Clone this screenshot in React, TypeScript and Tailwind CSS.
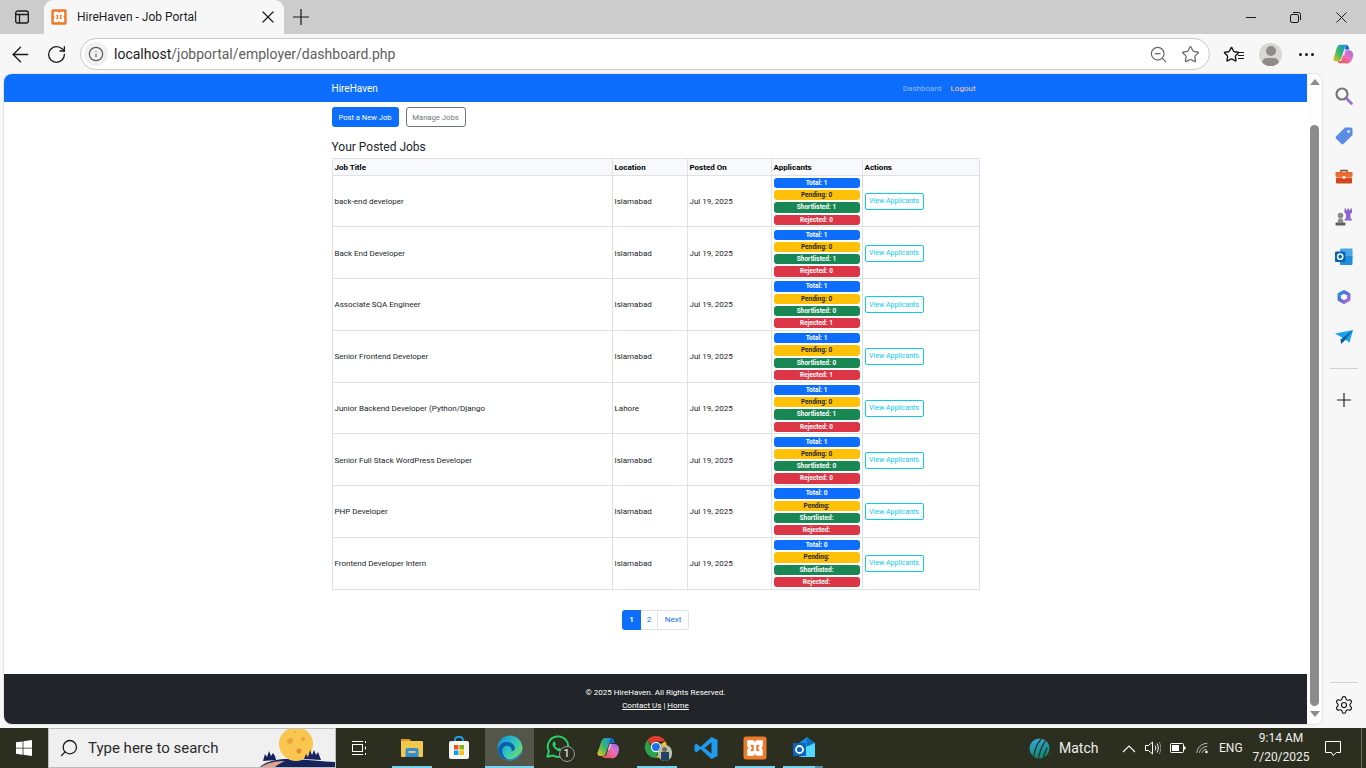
import { ArrowLeft, RotateCw, Info, ZoomOut, Star, X, Settings, Search } from "lucide-react";

const jobs = [
  ["back-end developer", "Islamabad", "1", "0", "1", "0"],
  ["Back End Developer", "Islamabad", "1", "0", "1", "0"],
  ["Associate SQA Engineer", "Islamabad", "1", "0", "0", "1"],
  ["Senior Frontend Developer", "Islamabad", "1", "0", "0", "1"],
  ["Junior Backend Developer (Python/Django", "Lahore", "1", "0", "1", "0"],
  ["Senior Full Stack WordPress Developer", "Islamabad", "1", "0", "0", "0"],
  ["PHP Developer", "Islamabad", "0", "", "", ""],
  ["Frontend Developer Intern", "Islamabad", "0", "", "", ""],
];

function Xampp({ size = 16 }: { size?: number }) {
  return (
    <svg width={size} height={size} viewBox="0 0 24 24">
      <rect x="0.5" y="0.5" width="23" height="23" rx="2.5" fill="#ee7a2c" />
      <path
        d="M4.500 4.500H10.500L12 6.500 13.500 4.500H19.500V10.500L18 12 19.500 13.500V19.500H13.500L12 17.500 10.500 19.500H4.500V13.500L6 12 4.500 10.500zM7.500 8.500V10.500L9 12 7.500 13.500V15.500H10L11 14.500V9.500L10 8.500zM16.500 8.500H14L13 9.500V14.500L14 15.500H16.500V13.500L15 12 16.500 10.500z"
        fill="#fff"
        fillRule="evenodd"
        stroke="#fff"
        strokeWidth="0.600"
        strokeLinejoin="round"
      />
    </svg>
  );
}

function Copilot({ size = 22 }: { size?: number }) {
  return (
    <svg width={size} height={size} viewBox="0 0 24 24">
      <defs>
        <linearGradient id="cpa" x1="0" y1="1" x2="1" y2="0">
          <stop offset="0" stopColor="#f5c518" />
          <stop offset="0.5" stopColor="#37b86b" />
          <stop offset="1" stopColor="#1c8fe8" />
        </linearGradient>
        <linearGradient id="cpb" x1="0" y1="1" x2="1" y2="0">
          <stop offset="0" stopColor="#f0503c" />
          <stop offset="0.6" stopColor="#e86fc0" />
          <stop offset="1" stopColor="#8f6cf0" />
        </linearGradient>
      </defs>
      <path d="M9 2h6l-5 15c-.6 1.700-1.600 3-3.600 3H4c-2 0-3-1.600-2.400-3.500L4 9.500C5 6 6 2 9 2z" fill="url(#cpa)" />
      <path d="M15 2c1.800 0 2.700 1.100 3.200 2.700L19 7h-5l1-5z" fill="#1467d8" />
      <path d="M15 22H9c-1.600 0-2.500-1-3-2.200l4-.3 4-11.500h4.500c2 0 3 1 4 2.500.9 2 .6 3.600 0 5.500-1 3-2.500 6.500-7.500 6.500z" fill="url(#cpb)" />
      <path d="M12 12.500l2-5h1.500l-2 6-1.500.5z" fill="#fff" opacity="0.55" />
    </svg>
  );
}

function Edge() {
  return (
    <svg width="26" height="26" viewBox="0 0 24 24">
      <defs>
        <linearGradient id="edgea" x1="0" y1="0" x2="1" y2="0.8">
          <stop offset="0" stopColor="#0f8ad8" />
          <stop offset="0.55" stopColor="#2fc3c0" />
          <stop offset="1" stopColor="#7be05a" />
        </linearGradient>
      </defs>
      <circle cx="12" cy="12" r="11.500" fill="url(#edgea)" />
      <path d="M1 13C2 8 6 6 10 6.500c4 .5 7 3.500 6.500 6.500-.3 1.500-2 2-3.500 2 1.500-2.500-.5-5-3.500-5-3 0-5 2.500-4.500 6 .4 3 3 6 6.500 7.300C6 23.500 1 19 1 13z" fill="#0c5fae" />
      <path d="M23.300 14c-1 5.500-5.600 9.500-11 9.500-2 0-3.200-.5-4.300-1.500 3 1 6 .3 8.500-1 2.500-1.500 5-3.500 6.800-7z" fill="#1b7fd4" />
    </svg>
  );
}

function Chrome() {
  return (
    <div className="relative w-[26px] h-[26px]">
      <svg width="24" height="24" viewBox="0 0 24 24">
        <path d="M12 1a11 11 0 0 1 9.500 5.500H12a5.500 5.500 0 0 0-5 3.200L3.400 5A11 11 0 0 1 12 1z" fill="#e33b2e" />
        <path d="M21.500 6.500A11 11 0 0 1 12 23l4.700-8.200A5.500 5.500 0 0 0 16.800 9l4.700-2.500z" fill="#fbc116" />
        <path d="M3.400 5l4.700 8.800A5.500 5.500 0 0 0 14 17l-2 6A11 11 0 0 1 3.400 5z" fill="#2ba24c" />
        <circle cx="12" cy="12" r="5.200" fill="#fff" />
        <circle cx="12" cy="12" r="4" fill="#1a73e8" />
      </svg>
      <div className="absolute right-[-2px] bottom-0 w-[14px] h-[16px] rounded-full bg-[#b9c2ab] overflow-hidden flex flex-col items-center">
        <div className="w-[5px] h-[5px] mt-[2px] rounded-full bg-[#7a6a50]" />
        <div className="w-[8px] h-[9px] bg-[#24415f]" />
      </div>
    </div>
  );
}

function TaskItem({ active, line, lineExtra, children }: { active?: boolean; line?: boolean; lineExtra?: boolean; children: React.ReactNode }) {
  return (
    <div className={`relative w-[49px] h-10 flex items-center justify-center ${active ? "bg-[#545649]" : ""}`}>
      {children}
      {line && !lineExtra && <div className={`absolute bottom-0 h-[2px] bg-[#76d3ee] ${active ? "left-0 right-0" : "left-[5px] right-[4px]"}`} />}
      {lineExtra && <div className="absolute bottom-0 left-[4px] right-[13px] h-[2px] bg-[#76d3ee]" />}
      {lineExtra && <div className="absolute bottom-0 right-[5px] w-[8px] h-[2px] bg-[#4e93a6]" />}
    </div>
  );
}

function Badge({ color, dark, children }: { color: string; dark?: boolean; children: React.ReactNode }) {
  return (
    <div className={`${color} ${dark ? "text-[#212529]" : "text-white"} h-[10.25px] rounded-[3px] text-[6.500px] leading-[10.25px] font-bold text-center`}>
      {children}
    </div>
  );
}

function SideIcon({ children }: { children: React.ReactNode }) {
  return <div className="h-10 flex items-center justify-center">{children}</div>;
}

export default function App() {
  return (
    <div className="w-[1366px] h-[768px] overflow-hidden flex flex-col bg-[#f7f7f7] font-['Roboto','Noto_Sans',sans-serif] text-[#212529]">
      {/* Tab strip */}
      <div className="h-[34px] bg-[#cccccc] flex items-center shrink-0">
        <div className="w-[44px] flex justify-center">
          <svg width="16" height="16" viewBox="0 0 16 16" fill="none" stroke="#1a1a1a" strokeWidth="1.300">
            <rect x="1.700" y="2" width="12.600" height="12" rx="2" />
            <path d="M1.700 5.500h12.600M5.500 5.500V14" />
          </svg>
        </div>
        <div className="w-[240px] h-[34px] bg-[#f7f7f7] rounded-t-[9px] flex items-center pl-[7px] pr-[6px]">
          <Xampp />
          <span className="ml-[10px] text-[12px] text-[#1f1f1f] flex-1">HireHaven - Job Portal</span>
          <X size={20} strokeWidth={1.300} absoluteStrokeWidth color="#1f1f1f" />
        </div>
        <div className="ml-[9px]">
          <svg width="16" height="16" viewBox="0 0 16 16" stroke="#1a1a1a" strokeWidth="1.200"><path d="M8 0v16M0 8h16" /></svg>
        </div>
        <div className="ml-auto flex items-center">
          <div className="w-[45px] flex justify-center">
            <svg width="10" height="10" viewBox="0 0 10 10" stroke="#1a1a1a" strokeWidth="1"><path d="M0 5.500h10" /></svg>
          </div>
          <div className="w-[45px] flex justify-center">
            <svg width="11" height="11" viewBox="0 0 11 11" fill="none" stroke="#1a1a1a" strokeWidth="1">
              <rect x="0.500" y="2.500" width="8" height="8" rx="1.500" />
              <path d="M3 .5h5.500a2 2 0 0 1 2 2V8" />
            </svg>
          </div>
          <div className="w-[47px] flex justify-center mr-[1px]">
            <svg width="11" height="11" viewBox="0 0 11 11" stroke="#1a1a1a" strokeWidth="1"><path d="M.5.5l10 10M10.500.5l-10 10" /></svg>
          </div>
        </div>
      </div>

      {/* Toolbar */}
      <div className="h-10 flex items-center shrink-0 bg-[#f7f7f7]">
        <div className="w-[40px] flex justify-center"><ArrowLeft size={25} strokeWidth={1.300} absoluteStrokeWidth color="#1a1a1a" /></div>
        <div className="w-[32px] flex justify-center"><RotateCw size={21} strokeWidth={1.300} absoluteStrokeWidth color="#1a1a1a" /></div>
        <div className="ml-[8px] w-[1130px] h-[32px] bg-white rounded-full border border-[#c9c9c9] flex items-center pl-[3px] pr-[9px]">
          <div className="w-[24px] h-[24px] rounded-full bg-[#f0f0f0] flex items-center justify-center">
            <Info size={16} strokeWidth={1.200} absoluteStrokeWidth color="#5a5a5a" />
          </div>
          <div className="ml-[6px] text-[14px] flex-1 whitespace-nowrap">
            <span className="text-[#1a1a1a]">localhost</span>
            <span className="text-[#5e5e5e]">/jobportal/employer/dashboard.php</span>
          </div>
          <ZoomOut size={19} strokeWidth={1.200} absoluteStrokeWidth color="#666" />
          <Star size={19} strokeWidth={1.200} absoluteStrokeWidth color="#666" className="ml-[13px]" />
        </div>
        <div className="ml-[14px] w-[20px] relative">
          <Star size={17} strokeWidth={1.400} absoluteStrokeWidth color="#1a1a1a" className="-ml-[1px]" />
          <div className="absolute right-0 top-[6px] w-[6px] h-[1px] bg-[#1a1a1a]" />
          <div className="absolute right-0 top-[9px] w-[6px] h-[1px] bg-[#1a1a1a]" />
          <div className="absolute right-0 top-[12px] w-[6px] h-[1px] bg-[#1a1a1a]" />
        </div>
        <div className="ml-[15px] w-[23px] h-[23px] rounded-full bg-[#d9d7d2] overflow-hidden flex flex-col items-center">
          <div className="w-[10px] h-[10px] rounded-full bg-[#8f8c88] mt-[3px] shrink-0" />
          <div className="w-[17px] h-[10px] rounded-full bg-[#8f8c88] mt-[2px] shrink-0" />
        </div>
        <div className="ml-[17px] flex gap-[3px]">
          <div className="w-[3px] h-[3px] rounded-full bg-[#1a1a1a]" />
          <div className="w-[3px] h-[3px] rounded-full bg-[#1a1a1a]" />
          <div className="w-[3px] h-[3px] rounded-full bg-[#1a1a1a]" />
        </div>
        <div className="ml-[18px]"><Copilot /></div>
      </div>

      {/* Main area */}
      <div className="h-[650px] flex shrink-0">
        <div className="ml-[4px] w-[1318px] h-[650px] bg-white rounded-[8px] overflow-hidden flex shadow-[0_0_2px_rgba(0,0,0,0.25)]">
          <div className="w-[1303px] flex flex-col">
            <div className="h-[28px] bg-[#0d6efd] shrink-0">
              <div className="w-[648px] h-full mx-auto flex items-center justify-between pr-[4px]">
                <span className="text-[10px] text-white">HireHaven</span>
                <div className="flex gap-[9px] text-[8px] pt-[1px]">
                  <span className="text-[#93bcfd]">Dashboard</span>
                  <span className="text-[#ffc8a0]">Logout</span>
                </div>
              </div>
            </div>
            <div className="w-[648px] mx-auto flex-1 flex flex-col">
              <div className="flex gap-[7px] mt-[5px]">
                <div className="w-[67px] h-[20px] pt-[1px] bg-[#0d6efd] rounded-[3px] text-white text-[7.600px] flex items-center justify-center">Post a New Job</div>
                <div className="w-[60px] h-[20px] pt-[1px] border border-[#6c757d] rounded-[3px] text-[#6c757d] text-[7.700px] flex items-center justify-center">Manage Jobs</div>
              </div>
              <h2 className="mt-[12px] text-[12px] leading-[16px] font-normal text-[#212529]">Your Posted Jobs</h2>
              <table className="mt-[3px] w-[647.500px] table-fixed border-collapse text-[8px]">
                <colgroup>
                  <col className="w-[280px]" />
                  <col className="w-[75px]" />
                  <col className="w-[84px]" />
                  <col className="w-[91px]" />
                  <col className="w-[117.500px]" />
                </colgroup>
                <thead>
                  <tr className="h-[16.500px] bg-[#f8f9fa] text-black">
                    {["Job Title", "Location", "Posted On", "Applicants", "Actions"].map((h) => (
                      <th key={h} className="border border-[#dee2e6] px-[2px] pt-[2px] pb-0 text-left font-bold align-middle leading-[12px]">{h}</th>
                    ))}
                  </tr>
                </thead>
                <tbody>
                  {jobs.map((j) => (
                    <tr key={j[0]} className="h-[51.750px]">
                      <td className="border border-[#dee2e6] px-[2px] pt-[2px] pb-0 align-middle">{j[0]}</td>
                      <td className="border border-[#dee2e6] px-[2px] pt-[2px] pb-0 align-middle">{j[1]}</td>
                      <td className="border border-[#dee2e6] px-[2px] pt-[2px] pb-0 align-middle">Jul 19, 2025</td>
                      <td className="border border-[#dee2e6] px-[2px] pt-[1px] pb-0 align-middle">
                        <div className="flex flex-col gap-[2px]">
                          <Badge color="bg-[#0d6efd]">Total: {j[2]}</Badge>
                          <Badge color="bg-[#ffc107]" dark>Pending: {j[3]}</Badge>
                          <Badge color="bg-[#198754]">Shortlisted: {j[4]}</Badge>
                          <Badge color="bg-[#dc3545]">Rejected: {j[5]}</Badge>
                        </div>
                      </td>
                      <td className="border border-[#dee2e6] px-[2px] pt-[1px] pb-0 align-middle">
                        <div className="w-[59px] h-[17px] border border-[#0dcaf0] rounded-[2px] text-[#0dcaf0] text-[7px] flex items-center justify-center whitespace-nowrap">View Applicants</div>
                      </td>
                    </tr>
                  ))}
                </tbody>
              </table>
              <div className="mt-[20px] flex justify-center text-[8px]">
                <div className="w-[19px] h-[20px] pt-[1px] bg-[#0d6efd] text-white font-bold rounded-l-[3px] flex items-center justify-center">1</div>
                <div className="w-[17px] h-[20px] pt-[1px] border-y border-r border-[#dee2e6] text-[#0d6efd] flex items-center justify-center">2</div>
                <div className="w-[31px] h-[20px] pt-[1px] border-y border-r border-[#dee2e6] text-[#0d6efd] rounded-r-[3px] flex items-center justify-center">Next</div>
              </div>
            </div>
            <div className="h-[50px] bg-[#212529] text-white text-[8px] flex flex-col items-center justify-center gap-[2px] shrink-0">
              <div className="leading-[11px]">© 2025 HireHaven. All Rights Reserved.</div>
              <div className="leading-[11px]"><span className="underline">Contact Us</span> | <span className="underline">Home</span></div>
            </div>
          </div>
          {/* Scrollbar */}
          <div className="w-[15px] bg-[#fdfdfd] flex flex-col items-center">
            <div className="mt-[5px] w-0 h-0 border-x-[5px] border-x-transparent border-b-[6px] border-b-[#8b8b8b]" />
            <div className="mt-[40px] w-[9px] h-[581px] rounded-full bg-[#8b8b8b]" />
            <div className="mt-[5px] w-0 h-0 border-x-[5px] border-x-transparent border-t-[6px] border-t-[#8b8b8b]" />
          </div>
        </div>
        {/* Edge sidebar */}
        <div className="w-[44px] flex flex-col items-center pt-[2px]">
          <SideIcon>
            <svg width="20" height="20" viewBox="0 0 20 20" fill="none">
              <circle cx="8" cy="8" r="5.500" stroke="#777" strokeWidth="2.200" />
              <path d="M12.500 12.500l5 5" stroke="#9a6ad8" strokeWidth="2.600" strokeLinecap="round" />
            </svg>
          </SideIcon>
          <SideIcon>
            <svg width="20" height="20" viewBox="0 0 20 20">
              <path d="M11 1.500h6a1.500 1.500 0 0 1 1.500 1.500v6L9.500 18a1.500 1.500 0 0 1-2 0L2 12.500a1.500 1.500 0 0 1 0-2z" fill="#5a8ee6" />
              <circle cx="14.500" cy="5.500" r="1.500" fill="#dbe8fb" />
            </svg>
          </SideIcon>
          <div className="mt-[1px]">
            <SideIcon>
              <svg width="20" height="20" viewBox="0 0 20 20">
                <path d="M7 5V3.500h6V5" fill="none" stroke="#8a4a2c" strokeWidth="1.500" />
                <rect x="1.500" y="5" width="17" height="5" rx="1" fill="#e96a33" />
                <rect x="2" y="10.500" width="16" height="6" rx="1" fill="#d4461a" />
                <rect x="8.500" y="9" width="3" height="3" rx="0.500" fill="#f5d9c9" />
              </svg>
            </SideIcon>
          </div>
          <SideIcon>
            <svg width="20" height="20" viewBox="0 0 20 20">
              <path d="M10.500 1.500h1.500v1.500h1.500V1.500h1.500v1.500h1.500V1.500h1.500v4l-1.500 1.500v4l1.500 1.500v1H10.500v-1L12 11V7l-1.500-1.500z" fill="#8b68c9" />
              <circle cx="6.500" cy="8.500" r="2.800" fill="#8a8a8a" />
              <path d="M4.500 11.500h4l1 4h-6z" fill="#8a8a8a" />
              <rect x="1.500" y="15.500" width="10" height="3" rx="1" fill="#5e5e5e" />
            </svg>
          </SideIcon>
          <SideIcon>
            <svg width="20" height="20" viewBox="0 0 20 20">
              <rect x="6" y="1.500" width="12.500" height="10" rx="1" fill="#4aa9e8" />
              <path d="M6 9h12.500v8a1 1 0 0 1-1 1H7a1 1 0 0 1-1-1z" fill="#1f8fd8" />
              <rect x="1" y="4.500" width="10.500" height="10.500" rx="1" fill="#0b62b8" />
              <circle cx="6.200" cy="9.700" r="2.600" fill="none" stroke="#fff" strokeWidth="1.500" />
            </svg>
          </SideIcon>
          <SideIcon>
            <svg width="20" height="20" viewBox="0 0 20 20">
              <defs>
                <linearGradient id="m365" x1="0" y1="0" x2="1" y2="1">
                  <stop offset="0" stopColor="#1f8fd8" />
                  <stop offset="0.45" stopColor="#5a70dc" />
                  <stop offset="1" stopColor="#b66ad8" />
                </linearGradient>
              </defs>
              <path d="M10 4.700l4.800 2.800v5L10 15.300l-4.800-2.800v-5z" fill="none" stroke="url(#m365)" strokeWidth="3.400" strokeLinejoin="round" />
            </svg>
          </SideIcon>
          <SideIcon>
            <svg width="20" height="20" viewBox="0 0 20 20">
              <path d="M1 6.500L19 3l-3.500 12.500L9 11z" fill="#1aa3e8" />
              <path d="M19 3L6.500 12.500 7 17l3.300-3z" fill="#0b5fa8" />
            </svg>
          </SideIcon>
          <div className="mt-[11px] w-[28px] h-[1px] bg-[#d0d0d0]" />
          <div className="mt-[24px]">
            <svg width="14" height="14" viewBox="0 0 14 14" stroke="#1a1a1a" strokeWidth="1.100"><path d="M7 0v14M0 7h14" /></svg>
          </div>
          <div className="mt-auto w-[28px] h-[1px] bg-[#d0d0d0]" />
          <div className="mt-[12px] mb-[9px]"><Settings size={20} strokeWidth={1.200} absoluteStrokeWidth color="#1a1a1a" /></div>
        </div>
      </div>

      <div className="h-[4px] shrink-0" />

      {/* Taskbar */}
      <div className="h-10 bg-[#2c2f20] flex items-center shrink-0 text-white">
        <div className="w-[48px] flex justify-center">
          <svg width="16" height="16" viewBox="0 0 16 16" fill="#fff">
            <path d="M0 2.300l6.600-.9v6.300H0zM7.400 1.300L16 0v7.700H7.400zM0 8.400h6.600v6.300L0 13.800zM7.400 8.400H16V16l-8.600-1.200z" />
          </svg>
        </div>
        <div className="relative w-[288px] h-10 bg-[#f0f0f0] border border-[#bdbdbd] flex items-center overflow-hidden">
          <Search size={20} strokeWidth={1.300} absoluteStrokeWidth color="#1a1a1a" className="ml-[10px] scale-x-[-1]" />
          <span className="ml-[9px] text-[15px] text-[#2b2b2b]">Type here to search</span>
          <svg className="absolute right-0 top-0" width="80" height="38" viewBox="0 0 80 38">
            <path d="M5 38c5-5 16-8 28-8 18 0 36 3 47 3v5z" fill="#16235c" />
            <path d="M6 38c6-4 14-6 24-6-4 2-8 4-10 6z" fill="#e0a48c" />
            <circle cx="41" cy="15" r="17" fill="#fbc64f" />
            <circle cx="35" cy="12" r="3" fill="#e9a63a" />
            <circle cx="48" cy="10" r="2" fill="#e9a63a" />
            <circle cx="44" cy="22" r="2.500" fill="#e08a3a" />
            <circle cx="40" cy="3" r="1" fill="#e9a63a" />
            <path d="M8 32l2-7 2 3 2-6 2 5 2-3 2 3 1 4z" fill="#16235c" />
            <path d="M49 30l2-5 2 3 2-7 2 5 2-5 2 5 2-3 3 8z" fill="#16235c" />
          </svg>
        </div>
        <div className="w-[50px] flex justify-start pl-[15px] ml-[1px]">
          <svg width="16" height="16" viewBox="0 0 16 16" fill="none" stroke="#fff" strokeWidth="1">
            <rect x="0.500" y="4.500" width="10" height="7" />
            <path d="M0 1.500h11M0 14.500h11M13.500 1v2M13.500 6.500v3M13.500 13v2" />
          </svg>
        </div>
        <TaskItem line>
          <svg width="22" height="20" viewBox="0 0 22 20">
            <path d="M0 2a1 1 0 0 1 1-1h7l2 2h11a1 1 0 0 1 1 1v14a1 1 0 0 1-1 1H1a1 1 0 0 1-1-1z" fill="#f2c84b" />
            <path d="M0 2a1 1 0 0 1 1-1h7l2 2H0z" fill="#d49d17" />
            <path d="M4.500 15v-3a2 2 0 0 1 2-2h9a2 2 0 0 1 2 2v3h-3v-2H7.500v2zM4.500 15h13v4h-13z" fill="#2f8fd8" />
          </svg>
        </TaskItem>
        <TaskItem>
          <svg className="-ml-[3px]" width="22" height="24" viewBox="0 0 22 24">
            <path d="M7 6V4a3 3 0 0 1 3-3h2a3 3 0 0 1 3 3v2" fill="none" stroke="#1a9ae8" strokeWidth="1.800" />
            <rect x="1" y="5" width="20" height="18" rx="2" fill="#f5f5f5" />
            <rect x="6" y="9" width="4.500" height="4.500" fill="#f04e23" />
            <rect x="11.500" y="9" width="4.500" height="4.500" fill="#7fba00" />
            <rect x="6" y="14.500" width="4.500" height="4.500" fill="#00a4ef" />
            <rect x="11.500" y="14.500" width="4.500" height="4.500" fill="#ffb900" />
          </svg>
        </TaskItem>
        <TaskItem active line><Edge /></TaskItem>
        <TaskItem>
          <div className="relative w-[30px] h-[28px]">
            <svg width="26" height="26" viewBox="0 0 24 24" fill="none">
              <path d="M3 21l1.500-5A9.500 9.500 0 1 1 8 19.800z" stroke="#25d366" strokeWidth="1.800" strokeLinejoin="round" />
              <path d="M8.500 7.500c-1 1-1 3 1 5.500s4.500 3.500 6 2.500l.8-1.300-2.500-1.500-1 .8c-1-.4-2.200-1.700-2.600-2.800l.9-1-1.200-2.700z" fill="#25d366" />
            </svg>
            <div className="absolute right-[-1px] bottom-0 w-[16px] h-[16px] rounded-full bg-[#2c2f20] border border-[#9a9a9a] text-[11px] leading-[14px] text-center">1</div>
          </div>
        </TaskItem>
        <TaskItem><Copilot size={24} /></TaskItem>
        <TaskItem line><Chrome /></TaskItem>
        <TaskItem>
          <svg width="24" height="24" viewBox="0 0 24 24">
            <path d="M17.500 1L23.500 4v16l-6 3L6.500 13l-4 3.200L.5 15V9l2-1.200 4 3.200z" fill="#1f9cf0" />
            <path d="M17.500 6.500L10.500 12l7 5.500z" fill="#2c2f20" />
          </svg>
        </TaskItem>
        <TaskItem line><Xampp size={24} /></TaskItem>
        <TaskItem line lineExtra>
          <svg width="24" height="24" viewBox="0 0 24 24">
            <path d="M7 7l8-6 8 6v13a1 1 0 0 1-1 1H8a1 1 0 0 1-1-1z" fill="#1490df" />
            <path d="M15 1l8 6-8 5z" fill="#0f6cbd" />
            <path d="M9 13l14-6v14H9z" fill="#50d9ff" />
            <rect x="1" y="7" width="13" height="13" rx="1" fill="#0c64c0" />
            <circle cx="7.500" cy="13.500" r="3.500" fill="none" stroke="#fff" strokeWidth="1.800" />
          </svg>
        </TaskItem>
        <div className="ml-auto flex items-center h-10">
          <svg width="21" height="21" viewBox="0 0 22 22">
            <defs>
              <linearGradient id="match" x1="0" y1="0" x2="0.300" y2="1">
                <stop offset="0" stopColor="#38a9e8" />
                <stop offset="1" stopColor="#0e8a76" />
              </linearGradient>
            </defs>
            <circle cx="11" cy="11" r="10.500" fill="url(#match)" />
            <path d="M5 19C6 12 9 5 13 1M10 21c1-7 4-13 7-18M15 21c.8-4 2.500-8 4-11" stroke="#2c2f20" strokeWidth="1.300" fill="none" />
          </svg>
          <span className="ml-[9px] w-[63px] text-[14px] text-[#eeeeee]">Match</span>
          <svg width="14" height="9" viewBox="0 0 14 9" fill="none" stroke="#fff" strokeWidth="1.100"><path d="M1 8l6-6 6 6" /></svg>
          <svg className="ml-[9px]" width="16" height="16" viewBox="0 0 16 16" fill="none" stroke="#fff" strokeWidth="1">
            <path d="M.5 5.500h3L7.500 2v12l-4-3.500h-3z" />
            <path d="M10 5.500c1 1.500 1 3.500 0 5M12 3.500c1.700 2.500 1.700 6.500 0 9" />
            <path d="M14.300 2c2 3.500 2 8.500 0 12" stroke="#8a8a80" />
          </svg>
          <svg className="ml-[9px]" width="16" height="10" viewBox="0 0 16 10" fill="none">
            <rect x="0.500" y="0.500" width="13" height="9" rx="1" stroke="#fff" />
            <rect x="2" y="2" width="7" height="6" fill="#fff" />
            <rect x="14" y="3.500" width="1.500" height="3" fill="#fff" />
          </svg>
          <svg className="ml-[10px]" width="13" height="12" viewBox="0 0 15 13" fill="none" stroke="#d8d8d8" strokeWidth="1">
            <path d="M1 12C1.500 6 6 1.500 13 1M4 12c.4-3.500 3-6.500 9-7.500M7 12c.3-2 2-3.500 5-4" />
            <circle cx="12" cy="11" r="1.500" fill="#fff" stroke="none" />
          </svg>
          <span className="ml-[10px] w-[30px] text-[12px] text-[#eeeeee]">ENG</span>
          <div className="w-[64px] text-center text-[12px] leading-[19px] text-[#eeeeee]">
            <div>9:14 AM</div>
            <div>7/20/2025</div>
          </div>
          <div className="ml-[12px]">
            <svg width="16" height="16" viewBox="0 0 16 16" fill="none" stroke="#fff" strokeWidth="1">
              <path d="M.5 1.500h15v11h-4l-3.500 3-1.500-3h-6z" />
            </svg>
          </div>
          <div className="ml-[20px] w-[1px] h-10 bg-[#6a6c60]" />
          <div className="w-[4px]" />
        </div>
      </div>
    </div>
  );
}
